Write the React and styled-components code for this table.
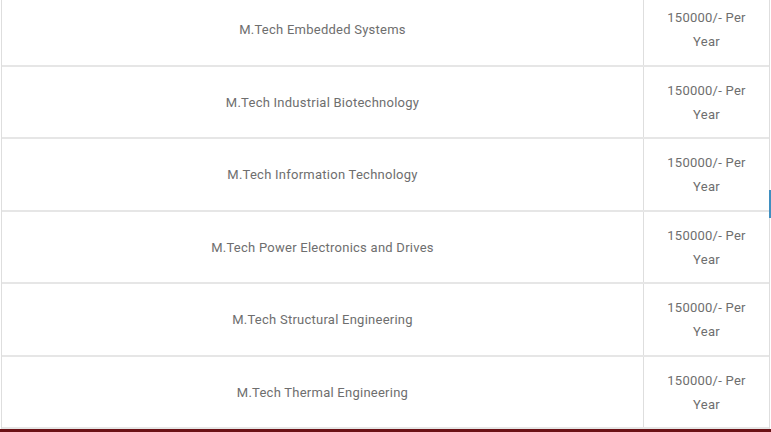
import styled, { createGlobalStyle } from "styled-components"

const courses = [
  "M.Tech Embedded Systems",
  "M.Tech Industrial Biotechnology",
  "M.Tech Information Technology",
  "M.Tech Power Electronics and Drives",
  "M.Tech Structural Engineering",
  "M.Tech Thermal Engineering",
]

export default function App() {
  return (
    <Page>
      <GlobalStyle />
      <FeeTable>
        {courses.map((c) => (
          <Row key={c}>
            <CourseCell>{c}</CourseCell>
            <FeeCell>150000/- Per Year</FeeCell>
          </Row>
        ))}
      </FeeTable>
      <FooterBar />
      <ScrollMark />
    </Page>
  )
}

const GlobalStyle = createGlobalStyle`
  html, body {
    margin: 0;
    padding: 0;
    background: #ffffff;
    overflow: hidden;
  }
  body {
    font-family: Roboto, "Liberation Sans", sans-serif;
  }
`

const Page = styled.div`
  width: 771px;
  height: 432px;
  overflow: hidden;
  position: relative;
`

const FeeTable = styled.div`
  margin-top: -6px;
  margin-left: 1px;
  width: 767px;
  border-left: 1px solid #dedede;
  border-right: 1px solid #dedede;
`

const Row = styled.div`
  display: grid;
  grid-template-columns: 642px 1fr;
  height: 72.5px;
  box-sizing: border-box;
  border-bottom: 2px solid #e6e6e6;
`

const Cell = styled.div`
  display: flex;
  align-items: center;
  justify-content: center;
  box-sizing: border-box;
  padding-top: 2px;
  text-align: center;
  font-size: 13px;
  line-height: 24px;
  letter-spacing: 0.25px;
  color: #6e6e6e;
`

const CourseCell = styled(Cell)`
  border-right: 1px solid #dedede;
`

const FeeCell = styled(Cell)`
  padding-left: 17px;
  padding-right: 17px;
`

const FooterBar = styled.div`
  height: 6px;
  background: #6b1216;
`

const ScrollMark = styled.div`
  position: absolute;
  right: 0;
  top: 190px;
  width: 2px;
  height: 28px;
  background: #3f8fc0;
`
